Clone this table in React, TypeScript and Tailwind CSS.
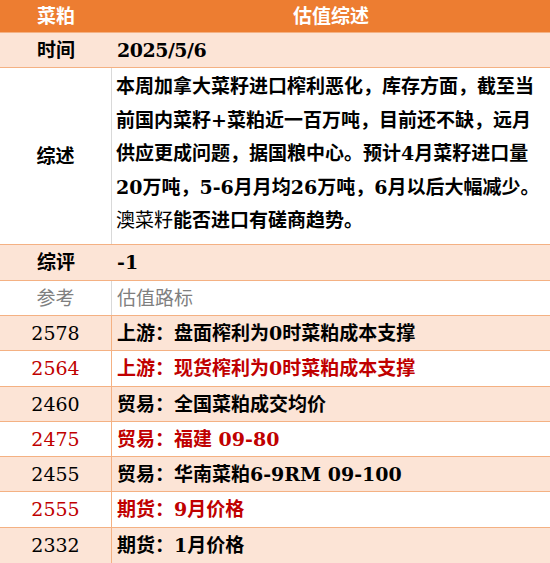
import React from 'react';

const FONT = { fontFamily: '"DejaVu Serif", "Noto Sans CJK SC", serif' };

type Row = { k: string; v: string; red?: boolean; peach: boolean };

const rows: Row[] = [
  { k: '2578', v: '上游：盘面榨利为0时菜粕成本支撑', peach: true },
  { k: '2564', v: '上游：现货榨利为0时菜粕成本支撑', red: true, peach: false },
  { k: '2460', v: '贸易：全国菜粕成交均价', peach: true },
  { k: '2475', v: '贸易：福建 09-80', red: true, peach: false },
  { k: '2455', v: '贸易：华南菜粕6-9RM 09-100', peach: true },
  { k: '2555', v: '期货：9月价格', red: true, peach: false },
  { k: '2332', v: '期货：1月价格', peach: true },
];

const summary = [
  '本周加拿大菜籽进口榨利恶化，库存方面，截至当',
  '前国内菜籽+菜粕近一百万吨，目前还不缺，远月',
  '供应更成问题，据国粮中心。预计4月菜籽进口量',
  '20万吨，5-6月月均26万吨，6月以后大幅减少。',
];

export default function App() {
  return (
    <div className="w-[550px] h-[563px] overflow-hidden bg-white text-[19px] text-black" style={FONT}>
      {/* 表头 */}
      <div className="grid grid-cols-[112px_1fr] h-[33px] bg-[#ED7D31] border-b border-[#F4B183] text-white font-bold">
        <div className="flex items-center justify-center">菜粕</div>
        <div className="flex items-center justify-center">估值综述</div>
      </div>

      <div className="grid grid-cols-[112px_1fr] h-[35px] bg-[#FCE4D6] border-b border-[#F4B183] font-bold">
        <div className="flex items-center justify-center">时间</div>
        <div className="flex items-center pl-[5px] tracking-[-0.5px]">2025/5/6</div>
      </div>

      <div className="grid grid-cols-[112px_1fr] h-[177px] bg-white border-b border-[#F4B183] font-bold">
        <div className="flex items-center justify-center border-r border-[#D9D9D9]">综述</div>
        <div className="flex flex-col justify-center pl-[4px] pb-[4px] leading-[33.5px] whitespace-nowrap">
          {summary.map((l) => (
            <div key={l}>{l}</div>
          ))}
          <div>
            <span className="font-normal">澳菜籽</span>能否进口有磋商趋势。
          </div>
        </div>
      </div>

      <div className="grid grid-cols-[112px_1fr] h-[36px] bg-[#FCE4D6] border-b border-[#F4B183] font-bold">
        <div className="flex items-center justify-center">综评</div>
        <div className="flex items-center pl-[5px]">-1</div>
      </div>

      <div className="grid grid-cols-[112px_1fr] h-[35px] bg-white border-b border-[#F4B183] text-[#7F7F7F]">
        <div className="flex items-center justify-center border-r border-[#D9D9D9]">参考</div>
        <div className="flex items-center pl-[5px]">估值路标</div>
      </div>

      {rows.map((r, i) => (
        <div
          key={r.k}
          className={`grid grid-cols-[112px_1fr] ${i === 1 || i === 5 ? 'h-[36px]' : 'h-[35px]'} ${
            r.peach ? 'bg-[#FCE4D6]' : 'bg-white'
          } ${i < rows.length - 1 ? 'border-b border-[#F4B183]' : ''} ${r.red ? 'text-[#C00000]' : 'text-black'}`}
        >
          <div className="flex items-center justify-center border-r border-[#F4B183]">{r.k}</div>
          <div className="flex items-center pl-[5px] font-bold whitespace-nowrap">{r.v}</div>
        </div>
      ))}
    </div>
  );
}
